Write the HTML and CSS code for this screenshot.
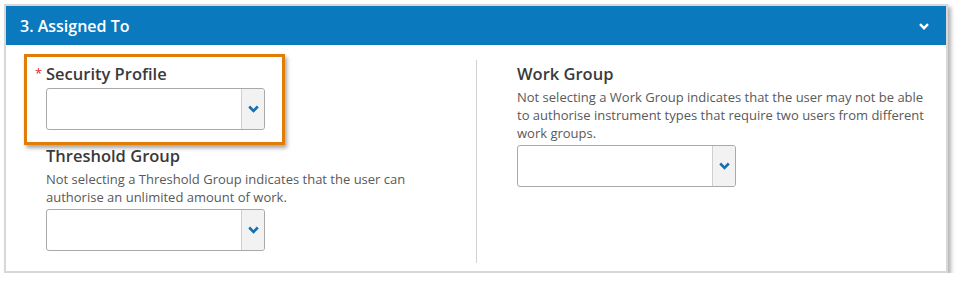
FILE: index.html
```html
<!DOCTYPE html>
<html lang="en">
<head>
    <meta charset="UTF-8">
    <title>Assigned To</title>
    <link rel="stylesheet" href="styles.css">
</head>
<body>
    <div class="panel">
        <div class="panel-header">
            <span class="panel-title">3. Assigned To</span>
            <svg class="header-chevron" width="10" height="7" viewBox="0 0 10 7">
                <path d="M1 1.2 L5 5.2 L9 1.2" fill="none" stroke="#fff" stroke-width="2.4"/>
            </svg>
        </div>
        <div class="panel-body">
            <div class="column column-left">
                <div class="field highlight">
                    <div class="field-label"><span class="req">*</span>Security Profile</div>
                    <div class="select">
                        <div class="select-value"></div>
                        <div class="select-button">
                            <svg width="11" height="8" viewBox="0 0 11 8">
                                <path d="M1.2 1.5 L5.5 5.8 L9.8 1.5" fill="none" stroke="#1470b0" stroke-width="2.6"/>
                            </svg>
                        </div>
                    </div>
                </div>
                <div class="field">
                    <div class="field-label">Threshold Group</div>
                    <p class="field-help">Not selecting a Threshold Group indicates that the user can authorise an unlimited amount of work.</p>
                    <div class="select">
                        <div class="select-value"></div>
                        <div class="select-button">
                            <svg width="11" height="8" viewBox="0 0 11 8">
                                <path d="M1.2 1.5 L5.5 5.8 L9.8 1.5" fill="none" stroke="#1470b0" stroke-width="2.6"/>
                            </svg>
                        </div>
                    </div>
                </div>
            </div>
            <div class="divider"></div>
            <div class="column column-right">
                <div class="field">
                    <div class="field-label">Work Group</div>
                    <p class="field-help wide">Not selecting a Work Group indicates that the user may not be able to authorise instrument types that require two users from different work groups.</p>
                    <div class="select">
                        <div class="select-value"></div>
                        <div class="select-button">
                            <svg width="11" height="8" viewBox="0 0 11 8">
                                <path d="M1.2 1.5 L5.5 5.8 L9.8 1.5" fill="none" stroke="#1470b0" stroke-width="2.6"/>
                            </svg>
                        </div>
                    </div>
                </div>
            </div>
        </div>
    </div>
</body>
</html>
```

FILE: styles.css
```css
body {
    margin: 0;
    background: #fff;
    font-family: "Open Sans", Arial, sans-serif;
    color: #333;
}
.panel {
    margin: 4px 0 0 4px;
    width: 940px;
    border: 2px solid #d8d8d8;
    box-shadow: 3px 3px 4px rgba(0, 0, 0, 0.3);
    background: #fff;
}
.panel-header {
    height: 39px;
    padding: 0 16px 0 14px;
    background: #0a79bd;
    display: flex;
    align-items: center;
    justify-content: space-between;
}
.panel-title {
    color: #fff;
    font-size: 16px;
    font-weight: 600;
}
.header-chevron {
    margin: 2px 1px 0 0;
}
.panel-body {
    display: grid;
    grid-template-columns: 470px 1px 1fr;
    height: 226px;
}
.column-left {
    padding: 9px 0 0 18px;
}
.column-right {
    padding: 19px 0 0 18px;
}
.divider {
    background: #d0d0d0;
    margin: 15px 0 8px;
}
.field {
    padding: 0 0 0 22px;
}
.field.highlight {
    width: 219px;
    padding: 6px 17px 12px 19px;
    border: 3px solid #e17d06;
    box-shadow: 2px 3px 4px rgba(0, 0, 0, 0.35);
    margin-bottom: 1px;
}
.field-label {
    font-size: 16.5px;
    font-weight: 600;
    line-height: 20px;
    color: #3a3a3a;
    margin-bottom: 4px;
}
.req {
    display: inline-block;
    width: 11px;
    margin-left: -11px;
    color: #d8262f;
    font-size: 13px;
    font-weight: 400;
    vertical-align: 2px;
}
.field-help {
    margin: 0;
    width: 385px;
    font-size: 13px;
    line-height: 18px;
    color: #595959;
}
.field-help.wide {
    width: 412px;
}
.select {
    width: 219px;
    height: 42px;
    margin-top: 3px;
    box-sizing: border-box;
    border: 1px solid #a9a9a9;
    border-radius: 3px;
    display: flex;
    background: #fff;
}
.select-value {
    flex: 1;
}
.select-button {
    width: 22px;
    border-left: 1px solid #cfcfcf;
    background: #f2f2f2;
    border-radius: 0 3px 3px 0;
    display: flex;
    align-items: center;
    justify-content: center;
}
```
